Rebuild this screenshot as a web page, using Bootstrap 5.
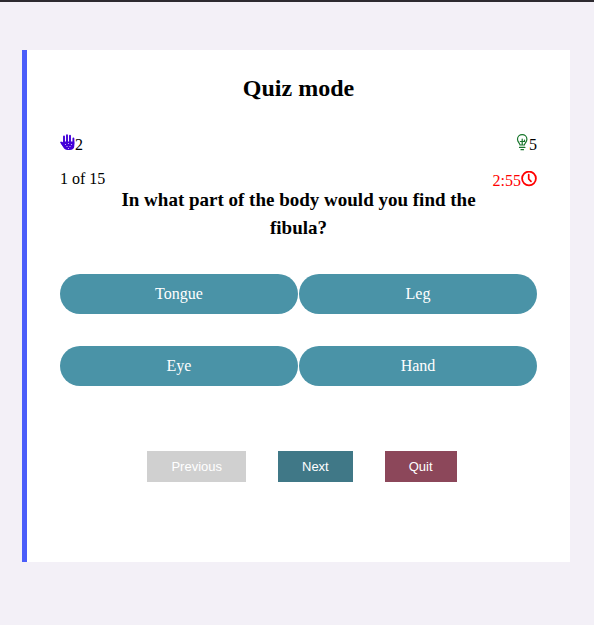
<!DOCTYPE html>
<html lang="en">
<head>
<meta charset="utf-8">
<meta name="viewport" content="width=device-width, initial-scale=1">
<title>Quiz mode</title>
<link href="https://cdn.jsdelivr.net/npm/bootstrap@5.3.0/dist/css/bootstrap.min.css" rel="stylesheet">
<style>
  body {
    background: #f3f0f7;
    border-top: 2px solid #2d2a30;
    color: #000;
    font-family: "Liberation Serif", "Times New Roman", serif;
    font-size: 16px;
    line-height: 20px;
  }
  .quiz-panel {
    margin: 48px 24px 48px 22px;
    padding: 24px 33px 80px;
    border-left: 5px solid #4b5dfa;
  }
  .quiz-title { font-size: 24px; line-height: 28px; margin-bottom: 32px; }
  .lifelines { margin-bottom: 14px; }
  .lifeline-count { padding-top: 1px; }
  .quiz-question { font-size: 19px; line-height: 28px; margin: -5px 0 32px; }
  .time-left { color: #f00; padding-top: 2px; }
  .answers { row-gap: 32px; column-gap: 1px; }
  .btn-answer, .btn-answer:hover {
    background: #4a93a7;
    color: #fff;
    font-size: 16px;
    line-height: 24px;
    padding: 8px;
    border: 0;
  }
  .quiz-actions { gap: 32px; margin-top: 65px; padding-left: 7px; }
  .btn-step {
    --bs-btn-color: #fff;
    --bs-btn-hover-color: #fff;
    --bs-btn-disabled-color: #fff;
    --bs-btn-disabled-opacity: 1;
    font-family: "Liberation Sans", Arial, sans-serif;
    font-size: 13px;
    line-height: 15px;
    padding: 8px 24px;
    border: 0;
  }
  .step-previous { --bs-btn-disabled-bg: #d0d0d0; }
  .step-next { --bs-btn-bg: #407887; --bs-btn-hover-bg: #376977; }
  .step-quit { --bs-btn-bg: #8c475a; --bs-btn-hover-bg: #7a3c4d; }
</style>
<script src="https://cdn.jsdelivr.net/npm/bootstrap@5.3.0/dist/js/bootstrap.bundle.min.js" defer></script>
</head>
<body>
<main class="quiz-panel bg-white">
  <h1 class="quiz-title text-center fw-bold">Quiz mode</h1>
  <div class="lifelines d-flex justify-content-between">
    <span class="d-flex">
      <svg width="15" height="17" viewBox="0 0 15 17" aria-hidden="true">
        <g fill="none" stroke="#4300d8" stroke-width="1.900" stroke-linecap="round">
          <path d="M4 9V2.500M7 8V1.200M10 8V1.800M13.400 10V4.500M1.200 8.500l3 4"/>
        </g>
        <path d="M3.100 7.500h11.200V12c0 2.600-1.800 4-4.500 4H7.500c-2 0-3.200-1-4.200-2.800L1 9.500z" fill="#4300d8"/>
        <g fill="#d9ccf7"><circle cx="5.500" cy="10.500" r=".6"/><circle cx="8.500" cy="9.500" r=".6"/><circle cx="11.500" cy="10.500" r=".6"/><circle cx="7" cy="12.500" r=".6"/><circle cx="10" cy="12.500" r=".6"/><circle cx="8.500" cy="14.500" r=".6"/></g>
      </svg><span class="lifeline-count">2</span>
    </span>
    <span class="d-flex">
      <svg width="13" height="17" viewBox="0 0 13 17" aria-hidden="true" fill="none" stroke="#16752a" stroke-width="1.200" stroke-linecap="round" stroke-linejoin="round">
        <path d="M4 11C4 9 1.500 8.300 1.500 5.200a4.700 4.500 0 0 1 9.400 0c0 3.100-2.500 3.800-2.500 5.800zM3.500 13.400h5.400M5 15.700h2.500M6.200 10.800V5M4.300 7.500h4.200V6"/>
      </svg><span class="lifeline-count">5</span>
    </span>
  </div>
  <div class="d-flex justify-content-between">
    <span>1 of 15</span>
    <span class="time-left d-flex">2:55<svg width="16" height="16" viewBox="0 0 16 16" aria-hidden="true" fill="none" stroke="#f00" stroke-linecap="round" stroke-linejoin="round">
      <circle cx="8" cy="7.500" r="6.900" stroke-width="1.800"/><path d="M7.700 3.500V8l2.300 2.300" stroke-width="1.700"/>
    </svg></span>
  </div>
  <h2 class="quiz-question text-center fw-bold px-5">In what part of the body would you find the fibula?</h2>
  <div class="answers d-flex flex-column">
    <div class="answers d-flex">
      <button type="button" class="btn btn-answer rounded-pill w-50">Tongue</button>
      <button type="button" class="btn btn-answer rounded-pill w-50">Leg</button>
    </div>
    <div class="answers d-flex">
      <button type="button" class="btn btn-answer rounded-pill w-50">Eye</button>
      <button type="button" class="btn btn-answer rounded-pill w-50">Hand</button>
    </div>
  </div>
  <div class="quiz-actions d-flex justify-content-center">
    <button type="button" class="btn btn-step step-previous rounded-0" disabled>Previous</button>
    <button type="button" class="btn btn-step step-next rounded-0">Next</button>
    <button type="button" class="btn btn-step step-quit rounded-0">Quit</button>
  </div>
</main>
</body>
</html>
